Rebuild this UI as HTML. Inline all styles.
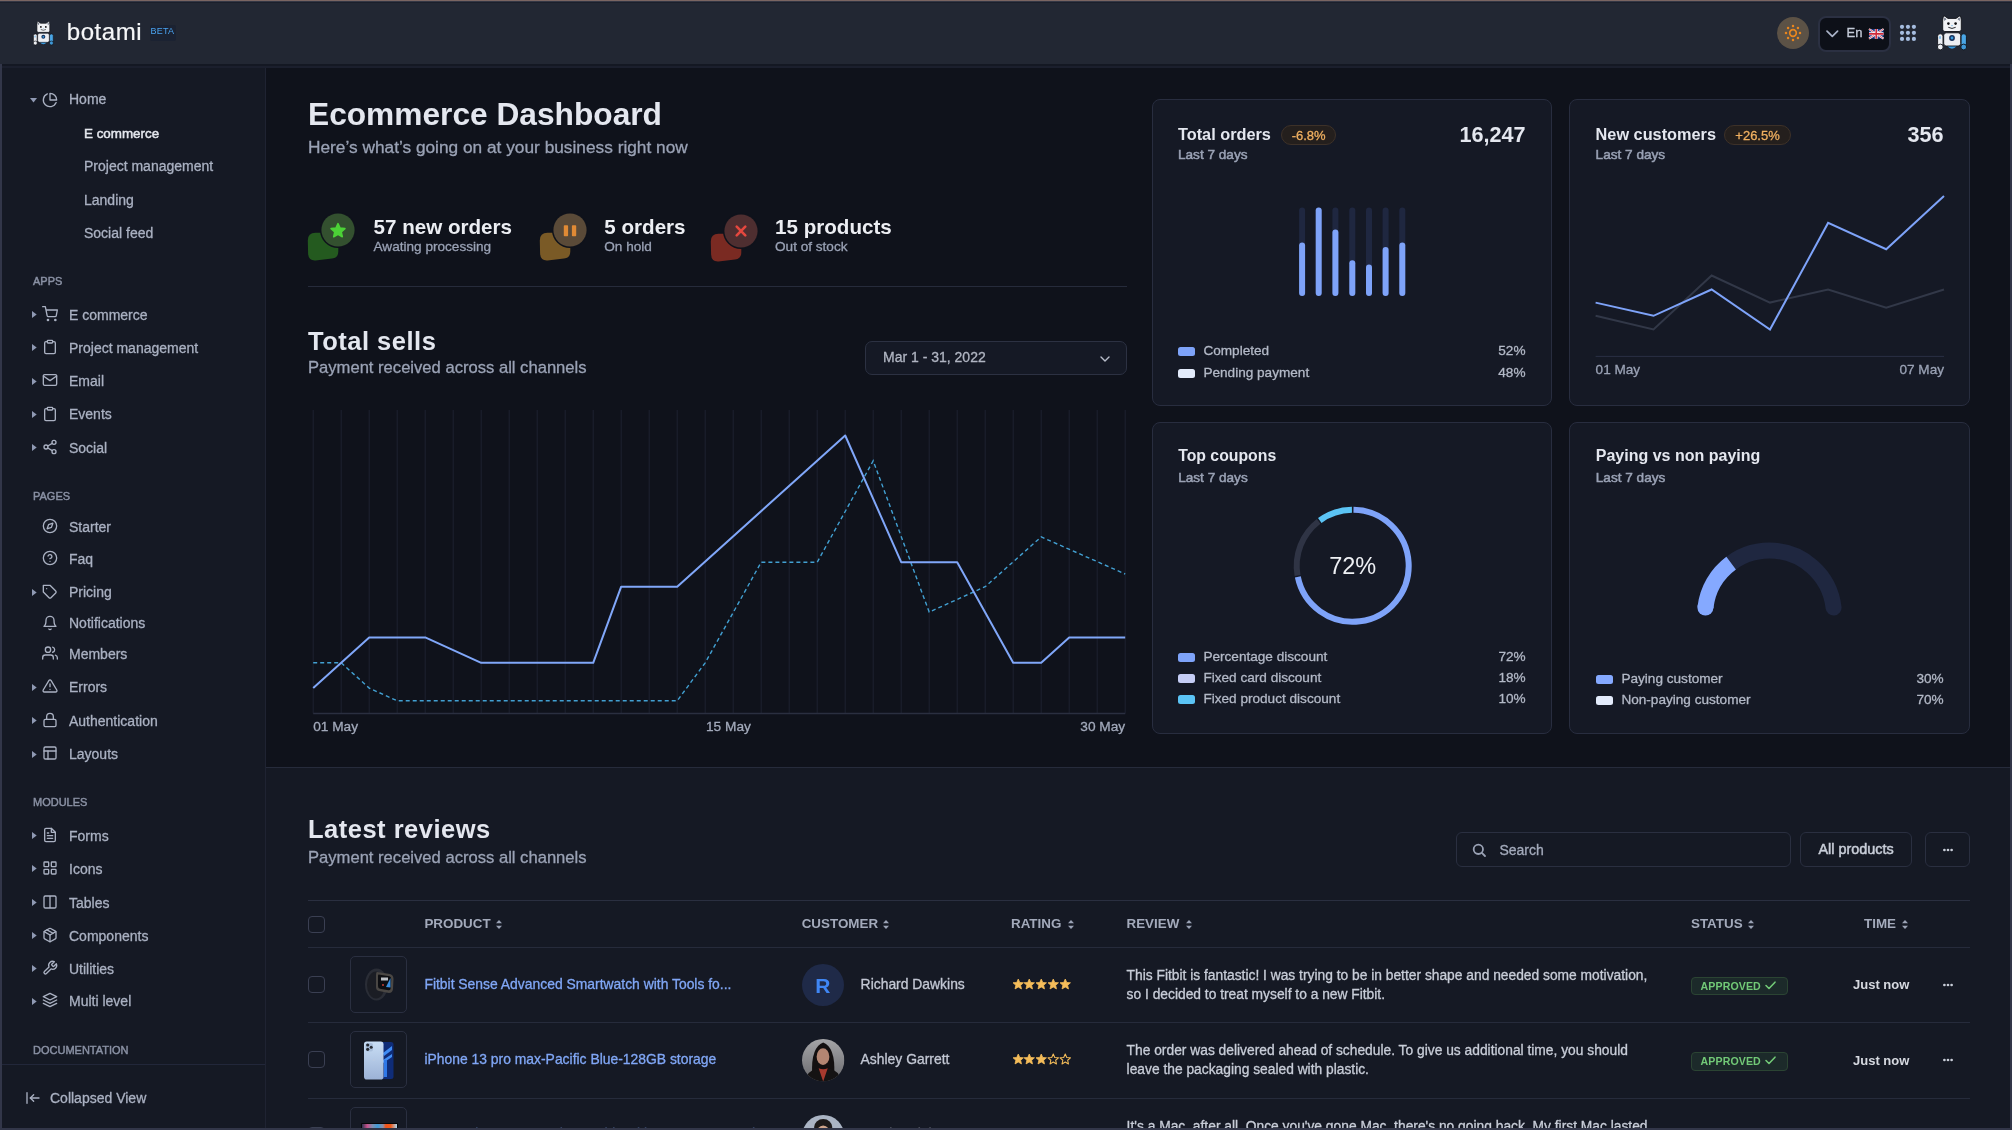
<!DOCTYPE html>
<html><head><meta charset="utf-8">
<style>
*{box-sizing:border-box;margin:0;padding:0}
html,body{width:2012px;height:1130px;overflow:hidden;background:#0f121b;font-family:"Liberation Sans",sans-serif;}
.a{position:absolute;white-space:nowrap}
svg.a{overflow:visible}
</style></head><body>
<div id="root" style="position:absolute;left:0;top:0;width:2012px;height:1130px;overflow:hidden;will-change:transform">

<div class="a" style="left:0px;top:0px;width:2012px;height:64px;background:#222733;"></div>
<div class="a" style="left:0px;top:0px;width:2012px;height:1px;background:#7a6562;"></div>
<div class="a" style="left:0px;top:1px;width:2012px;height:1px;background:#333644;"></div>
<div class="a" style="left:0px;top:2px;width:2012px;height:1px;background:#1b1f2b;"></div>
<div class="a" style="left:2px;top:64px;width:2008px;height:2px;background:#141823;"></div>
<div class="a" style="left:2px;top:66px;width:2008px;height:2px;background:#1b1f2d;"></div>
<div class="a" style="left:2px;top:68px;width:263px;height:1060px;background:#151924;"></div>
<div class="a" style="left:265px;top:68px;width:1px;height:1060px;background:#1f2332;"></div>
<div class="a" style="left:266px;top:767px;width:1744px;height:361px;background:#151924;"></div>
<div class="a" style="left:266px;top:767px;width:1744px;height:1px;background:#262b3b;"></div>
<svg class="a" style="left:30px;top:97.7px" width="8" height="6"><polygon points="0,0 7,0 3.5,4.5" fill="#8f99b3"/></svg>
<svg class="a" style="left:42px;top:92px" width="16" height="16" viewBox="0 0 24 24" fill="none" stroke="#aab1c2" stroke-width="2" stroke-linecap="round" stroke-linejoin="round"><path d="M21.21 15.89A10 10 0 1 1 8 2.83"/><path d="M22 12A10 10 0 0 0 12 2v10z"/></svg>
<div class="a" style="left:69px;top:92.35px;font-size:14px;line-height:14px;color:#aab1c2;-webkit-text-stroke:0.3px #aab1c2;">Home</div>
<div class="a" style="left:84px;top:126.56px;font-size:13.4px;line-height:13.4px;color:#e5e8ef;-webkit-text-stroke:0.45px #e5e8ef;">E commerce</div>
<div class="a" style="left:84px;top:159.35px;font-size:14px;line-height:14px;color:#aab1c2;-webkit-text-stroke:0.3px #aab1c2;">Project management</div>
<div class="a" style="left:84px;top:192.65px;font-size:14px;line-height:14px;color:#aab1c2;-webkit-text-stroke:0.3px #aab1c2;">Landing</div>
<div class="a" style="left:84px;top:225.95px;font-size:14px;line-height:14px;color:#aab1c2;-webkit-text-stroke:0.3px #aab1c2;">Social feed</div>
<div class="a" style="left:33px;top:275.89px;font-size:11px;line-height:11px;color:#8a91a4;-webkit-text-stroke:0.45px #8a91a4;">APPS</div>
<svg class="a" style="left:32px;top:311.2px" width="6" height="8"><polygon points="0,0 4.7,3.5 0,7" fill="#8f99b3"/></svg>
<svg class="a" style="left:42px;top:305.7px" width="16" height="16" viewBox="0 0 24 24" fill="none" stroke="#aab1c2" stroke-width="2" stroke-linecap="round" stroke-linejoin="round"><circle cx="9" cy="21" r="1"/><circle cx="20" cy="21" r="1"/><path d="M1 1h4l2.68 13.39a2 2 0 0 0 2 1.61h9.72a2 2 0 0 0 2-1.61L23 6H6"/></svg>
<div class="a" style="left:69px;top:307.65px;font-size:14px;line-height:14px;color:#aab1c2;-webkit-text-stroke:0.3px #aab1c2;">E commerce</div>
<svg class="a" style="left:32px;top:344.4px" width="6" height="8"><polygon points="0,0 4.7,3.5 0,7" fill="#8f99b3"/></svg>
<svg class="a" style="left:42px;top:338.9px" width="16" height="16" viewBox="0 0 24 24" fill="none" stroke="#aab1c2" stroke-width="2" stroke-linecap="round" stroke-linejoin="round"><path d="M16 4h2a2 2 0 0 1 2 2v14a2 2 0 0 1-2 2H6a2 2 0 0 1-2-2V6a2 2 0 0 1 2-2h2"/><rect x="8" y="2" width="8" height="4" rx="1" ry="1"/></svg>
<div class="a" style="left:69px;top:340.85px;font-size:14px;line-height:14px;color:#aab1c2;-webkit-text-stroke:0.3px #aab1c2;">Project management</div>
<svg class="a" style="left:32px;top:377.6px" width="6" height="8"><polygon points="0,0 4.7,3.5 0,7" fill="#8f99b3"/></svg>
<svg class="a" style="left:42px;top:372.1px" width="16" height="16" viewBox="0 0 24 24" fill="none" stroke="#aab1c2" stroke-width="2" stroke-linecap="round" stroke-linejoin="round"><path d="M4 4h16c1.1 0 2 .9 2 2v12c0 1.1-.9 2-2 2H4c-1.1 0-2-.9-2-2V6c0-1.1.9-2 2-2z"/><polyline points="22,6 12,13 2,6"/></svg>
<div class="a" style="left:69px;top:374.05px;font-size:14px;line-height:14px;color:#aab1c2;-webkit-text-stroke:0.3px #aab1c2;">Email</div>
<svg class="a" style="left:32px;top:411px" width="6" height="8"><polygon points="0,0 4.7,3.5 0,7" fill="#8f99b3"/></svg>
<svg class="a" style="left:42px;top:405.5px" width="16" height="16" viewBox="0 0 24 24" fill="none" stroke="#aab1c2" stroke-width="2" stroke-linecap="round" stroke-linejoin="round"><path d="M16 4h2a2 2 0 0 1 2 2v14a2 2 0 0 1-2 2H6a2 2 0 0 1-2-2V6a2 2 0 0 1 2-2h2"/><rect x="8" y="2" width="8" height="4" rx="1" ry="1"/></svg>
<div class="a" style="left:69px;top:407.45px;font-size:14px;line-height:14px;color:#aab1c2;-webkit-text-stroke:0.3px #aab1c2;">Events</div>
<svg class="a" style="left:32px;top:444.2px" width="6" height="8"><polygon points="0,0 4.7,3.5 0,7" fill="#8f99b3"/></svg>
<svg class="a" style="left:42px;top:438.7px" width="16" height="16" viewBox="0 0 24 24" fill="none" stroke="#aab1c2" stroke-width="2" stroke-linecap="round" stroke-linejoin="round"><circle cx="18" cy="5" r="3"/><circle cx="6" cy="12" r="3"/><circle cx="18" cy="19" r="3"/><line x1="8.59" y1="13.51" x2="15.42" y2="17.49"/><line x1="15.41" y1="6.51" x2="8.59" y2="10.49"/></svg>
<div class="a" style="left:69px;top:440.65px;font-size:14px;line-height:14px;color:#aab1c2;-webkit-text-stroke:0.3px #aab1c2;">Social</div>
<div class="a" style="left:33px;top:491.09px;font-size:11px;line-height:11px;color:#8a91a4;-webkit-text-stroke:0.45px #8a91a4;">PAGES</div>
<svg class="a" style="left:42px;top:518.3px" width="16" height="16" viewBox="0 0 24 24" fill="none" stroke="#aab1c2" stroke-width="2" stroke-linecap="round" stroke-linejoin="round"><circle cx="12" cy="12" r="10"/><polygon points="16.24 7.76 14.12 14.12 7.76 16.24 9.88 9.88 16.24 7.76"/></svg>
<div class="a" style="left:69px;top:520.25px;font-size:14px;line-height:14px;color:#aab1c2;-webkit-text-stroke:0.3px #aab1c2;">Starter</div>
<svg class="a" style="left:42px;top:550.0px" width="16" height="16" viewBox="0 0 24 24" fill="none" stroke="#aab1c2" stroke-width="2" stroke-linecap="round" stroke-linejoin="round"><circle cx="12" cy="12" r="10"/><path d="M9.09 9a3 3 0 0 1 5.83 1c0 2-3 3-3 3"/><line x1="12" y1="17" x2="12.01" y2="17"/></svg>
<div class="a" style="left:69px;top:551.95px;font-size:14px;line-height:14px;color:#aab1c2;-webkit-text-stroke:0.3px #aab1c2;">Faq</div>
<svg class="a" style="left:32px;top:589px" width="6" height="8"><polygon points="0,0 4.7,3.5 0,7" fill="#8f99b3"/></svg>
<svg class="a" style="left:42px;top:583.5px" width="16" height="16" viewBox="0 0 24 24" fill="none" stroke="#aab1c2" stroke-width="2" stroke-linecap="round" stroke-linejoin="round"><path d="M20.59 13.41l-7.17 7.17a2 2 0 0 1-2.83 0L2 12V2h10l8.59 8.59a2 2 0 0 1 0 2.82z"/><line x1="7" y1="7" x2="7.01" y2="7"/></svg>
<div class="a" style="left:69px;top:585.45px;font-size:14px;line-height:14px;color:#aab1c2;-webkit-text-stroke:0.3px #aab1c2;">Pricing</div>
<svg class="a" style="left:42px;top:614.5px" width="16" height="16" viewBox="0 0 24 24" fill="none" stroke="#aab1c2" stroke-width="2" stroke-linecap="round" stroke-linejoin="round"><path d="M18 8A6 6 0 0 0 6 8c0 7-3 9-3 9h18s-3-2-3-9"/><path d="M13.73 21a2 2 0 0 1-3.46 0"/></svg>
<div class="a" style="left:69px;top:616.45px;font-size:14px;line-height:14px;color:#aab1c2;-webkit-text-stroke:0.3px #aab1c2;">Notifications</div>
<svg class="a" style="left:42px;top:645.3px" width="16" height="16" viewBox="0 0 24 24" fill="none" stroke="#aab1c2" stroke-width="2" stroke-linecap="round" stroke-linejoin="round"><path d="M17 21v-2a4 4 0 0 0-4-4H5a4 4 0 0 0-4 4v2"/><circle cx="9" cy="7" r="4"/><path d="M23 21v-2a4 4 0 0 0-3-3.87"/><path d="M16 3.13a4 4 0 0 1 0 7.75"/></svg>
<div class="a" style="left:69px;top:647.25px;font-size:14px;line-height:14px;color:#aab1c2;-webkit-text-stroke:0.3px #aab1c2;">Members</div>
<svg class="a" style="left:32px;top:683.7px" width="6" height="8"><polygon points="0,0 4.7,3.5 0,7" fill="#8f99b3"/></svg>
<svg class="a" style="left:42px;top:678.2px" width="16" height="16" viewBox="0 0 24 24" fill="none" stroke="#aab1c2" stroke-width="2" stroke-linecap="round" stroke-linejoin="round"><path d="M10.29 3.86L1.82 18a2 2 0 0 0 1.71 3h16.94a2 2 0 0 0 1.71-3L13.71 3.86a2 2 0 0 0-3.42 0z"/><line x1="12" y1="9" x2="12" y2="13"/><line x1="12" y1="17" x2="12.01" y2="17"/></svg>
<div class="a" style="left:69px;top:680.15px;font-size:14px;line-height:14px;color:#aab1c2;-webkit-text-stroke:0.3px #aab1c2;">Errors</div>
<svg class="a" style="left:32px;top:717.4px" width="6" height="8"><polygon points="0,0 4.7,3.5 0,7" fill="#8f99b3"/></svg>
<svg class="a" style="left:42px;top:711.9px" width="16" height="16" viewBox="0 0 24 24" fill="none" stroke="#aab1c2" stroke-width="2" stroke-linecap="round" stroke-linejoin="round"><rect x="3" y="11" width="18" height="11" rx="2" ry="2"/><path d="M7 11V7a5 5 0 0 1 10 0v4"/></svg>
<div class="a" style="left:69px;top:713.85px;font-size:14px;line-height:14px;color:#aab1c2;-webkit-text-stroke:0.3px #aab1c2;">Authentication</div>
<svg class="a" style="left:32px;top:750.6px" width="6" height="8"><polygon points="0,0 4.7,3.5 0,7" fill="#8f99b3"/></svg>
<svg class="a" style="left:42px;top:745.1px" width="16" height="16" viewBox="0 0 24 24" fill="none" stroke="#aab1c2" stroke-width="2" stroke-linecap="round" stroke-linejoin="round"><rect x="3" y="3" width="18" height="18" rx="2" ry="2"/><line x1="3" y1="9" x2="21" y2="9"/><line x1="9" y1="21" x2="9" y2="9"/></svg>
<div class="a" style="left:69px;top:747.05px;font-size:14px;line-height:14px;color:#aab1c2;-webkit-text-stroke:0.3px #aab1c2;">Layouts</div>
<div class="a" style="left:33px;top:797.49px;font-size:11px;line-height:11px;color:#8a91a4;-webkit-text-stroke:0.45px #8a91a4;">MODULES</div>
<svg class="a" style="left:32px;top:832.3px" width="6" height="8"><polygon points="0,0 4.7,3.5 0,7" fill="#8f99b3"/></svg>
<svg class="a" style="left:42px;top:826.8px" width="16" height="16" viewBox="0 0 24 24" fill="none" stroke="#aab1c2" stroke-width="2" stroke-linecap="round" stroke-linejoin="round"><path d="M14 2H6a2 2 0 0 0-2 2v16a2 2 0 0 0 2 2h12a2 2 0 0 0 2-2V8z"/><polyline points="14 2 14 8 20 8"/><line x1="16" y1="13" x2="8" y2="13"/><line x1="16" y1="17" x2="8" y2="17"/><polyline points="10 9 9 9 8 9"/></svg>
<div class="a" style="left:69px;top:828.75px;font-size:14px;line-height:14px;color:#aab1c2;-webkit-text-stroke:0.3px #aab1c2;">Forms</div>
<svg class="a" style="left:32px;top:865.3px" width="6" height="8"><polygon points="0,0 4.7,3.5 0,7" fill="#8f99b3"/></svg>
<svg class="a" style="left:42px;top:859.8px" width="16" height="16" viewBox="0 0 24 24" fill="none" stroke="#aab1c2" stroke-width="2" stroke-linecap="round" stroke-linejoin="round"><rect x="3" y="3" width="7" height="7" rx="1"/><rect x="14" y="3" width="7" height="7" rx="1"/><rect x="14" y="14" width="7" height="7" rx="1"/><rect x="3" y="14" width="7" height="7" rx="1"/></svg>
<div class="a" style="left:69px;top:861.75px;font-size:14px;line-height:14px;color:#aab1c2;-webkit-text-stroke:0.3px #aab1c2;">Icons</div>
<svg class="a" style="left:32px;top:899.3px" width="6" height="8"><polygon points="0,0 4.7,3.5 0,7" fill="#8f99b3"/></svg>
<svg class="a" style="left:42px;top:893.8px" width="16" height="16" viewBox="0 0 24 24" fill="none" stroke="#aab1c2" stroke-width="2" stroke-linecap="round" stroke-linejoin="round"><path d="M12 3h7a2 2 0 0 1 2 2v14a2 2 0 0 1-2 2h-7m0-18H5a2 2 0 0 0-2 2v14a2 2 0 0 0 2 2h7m0-18v18"/></svg>
<div class="a" style="left:69px;top:895.75px;font-size:14px;line-height:14px;color:#aab1c2;-webkit-text-stroke:0.3px #aab1c2;">Tables</div>
<svg class="a" style="left:32px;top:932.2px" width="6" height="8"><polygon points="0,0 4.7,3.5 0,7" fill="#8f99b3"/></svg>
<svg class="a" style="left:42px;top:926.7px" width="16" height="16" viewBox="0 0 24 24" fill="none" stroke="#aab1c2" stroke-width="2" stroke-linecap="round" stroke-linejoin="round"><line x1="16.5" y1="9.4" x2="7.5" y2="4.21"/><path d="M21 16V8a2 2 0 0 0-1-1.73l-7-4a2 2 0 0 0-2 0l-7 4A2 2 0 0 0 3 8v8a2 2 0 0 0 1 1.73l7 4a2 2 0 0 0 2 0l7-4A2 2 0 0 0 21 16z"/><polyline points="3.27 6.96 12 12.01 20.73 6.96"/><line x1="12" y1="22.08" x2="12" y2="12"/></svg>
<div class="a" style="left:69px;top:928.65px;font-size:14px;line-height:14px;color:#aab1c2;-webkit-text-stroke:0.3px #aab1c2;">Components</div>
<svg class="a" style="left:32px;top:965.2px" width="6" height="8"><polygon points="0,0 4.7,3.5 0,7" fill="#8f99b3"/></svg>
<svg class="a" style="left:42px;top:959.7px" width="16" height="16" viewBox="0 0 24 24" fill="none" stroke="#aab1c2" stroke-width="2" stroke-linecap="round" stroke-linejoin="round"><path d="M14.7 6.3a1 1 0 0 0 0 1.4l1.6 1.6a1 1 0 0 0 1.4 0l3.77-3.77a6 6 0 0 1-7.94 7.94l-6.91 6.91a2.12 2.12 0 0 1-3-3l6.91-6.91a6 6 0 0 1 7.94-7.94l-3.76 3.76z"/></svg>
<div class="a" style="left:69px;top:961.65px;font-size:14px;line-height:14px;color:#aab1c2;-webkit-text-stroke:0.3px #aab1c2;">Utilities</div>
<svg class="a" style="left:32px;top:997.9px" width="6" height="8"><polygon points="0,0 4.7,3.5 0,7" fill="#8f99b3"/></svg>
<svg class="a" style="left:42px;top:992.4px" width="16" height="16" viewBox="0 0 24 24" fill="none" stroke="#aab1c2" stroke-width="2" stroke-linecap="round" stroke-linejoin="round"><polygon points="12 2 2 7 12 12 22 7 12 2"/><polyline points="2 17 12 22 22 17"/><polyline points="2 12 12 17 22 12"/></svg>
<div class="a" style="left:69px;top:994.35px;font-size:14px;line-height:14px;color:#aab1c2;-webkit-text-stroke:0.3px #aab1c2;">Multi level</div>
<div class="a" style="left:33px;top:1045.39px;font-size:11px;line-height:11px;color:#8a91a4;-webkit-text-stroke:0.45px #8a91a4;">DOCUMENTATION</div>
<div class="a" style="left:2px;top:1064px;width:263px;height:1px;background:#22273a;"></div>
<svg class="a" style="left:25px;top:1090px" width="16" height="16" viewBox="0 0 24 24" fill="none" stroke="#aab1c2" stroke-width="2" stroke-linecap="round" stroke-linejoin="round"><line x1="3" y1="4" x2="3" y2="20"/><line x1="21" y1="12" x2="8" y2="12"/><polyline points="13 7 8 12 13 17"/></svg>
<div class="a" style="left:50px;top:1091.35px;font-size:14px;line-height:14px;color:#aab1c2;-webkit-text-stroke:0.3px #aab1c2;">Collapsed View</div>
<svg class="a" style="left:33.2px;top:20.56px" width="20.7" height="24.8" viewBox="0 0 30 36"><rect x="0.6" y="18.8" width="5.4" height="12.5" rx="2.4" fill="#eceef3" stroke="#101218" stroke-width="0.9"/><circle cx="3.3" cy="32" r="2.9" fill="#eceef3" stroke="#101218" stroke-width="0.9"/><rect x="2.2" y="21" width="1.6" height="3" rx="0.8" fill="#6db8ee"/><rect x="24" y="18.8" width="5.4" height="12.5" rx="2.4" fill="#4aa6e6" stroke="#101218" stroke-width="0.9"/><circle cx="26.7" cy="32" r="2.9" fill="#3f97d6" stroke="#101218" stroke-width="0.9"/><path d="M9.8 30.5 Q15 36.8 20.2 30.5 Z" fill="#3a9be0"/><path d="M6.2 2 Q6.4 0.3 7.8 1.2 L11 3.4 L19 3.4 L22.2 1.2 Q23.6 0.3 23.8 2 L24.3 5 L24.3 14.3 Q24.3 16.5 22.1 16.5 L7.9 16.5 Q5.7 16.5 5.7 14.3 L5.7 5 Z" fill="#f1f2f5" stroke="#101218" stroke-width="0.9"/><path d="M7.2 2.6 L9.6 3.9 L7.2 6 Z M22.8 2.6 L20.4 3.9 L22.8 6 Z" fill="#6d7484"/><circle cx="11.4" cy="8.6" r="1.3" fill="#0d0d10"/><circle cx="18.6" cy="8.6" r="1.3" fill="#0d0d10"/><circle cx="15" cy="10.6" r="0.6" fill="#4aa6e6"/><path d="M11.3 12.3 Q15 14.6 18.7 12.3" stroke="#2a2d33" stroke-width="1" fill="none"/><rect x="6.7" y="17.8" width="17" height="13.2" rx="2.6" fill="#eceef3" stroke="#101218" stroke-width="0.9"/><circle cx="15" cy="23" r="2.9" fill="#16305a"/><circle cx="15" cy="23" r="1.4" fill="#3a9be0"/></svg>
<div class="a" style="left:66.8px;top:20.48px;font-size:24px;line-height:24px;color:#f5f6f8;-webkit-text-stroke:0.2px #f5f6f8;letter-spacing:0.55px">botami</div>
<div class="a" style="left:150px;top:25.2px;width:25.6px;height:15.6px;background:#1b2232;border-radius:2px"></div>
<div class="a" style="left:150.6px;top:27.18px;font-size:9px;line-height:9px;color:#4aa3f0;letter-spacing:0.15px">BETA</div>
<div class="a" style="left:1777px;top:17px;width:32px;height:32px;border-radius:50%;background:#5c5246"></div>
<svg class="a" style="left:1783px;top:23px" width="20" height="20" viewBox="-10 -10 20 20"><circle cx="0" cy="0" r="3.3" fill="none" stroke="#e8861f" stroke-width="1.7"/><circle cx="0.00" cy="-7.00" r="1.25" fill="#e8861f"/><circle cx="4.95" cy="-4.95" r="1.25" fill="#e8861f"/><circle cx="7.00" cy="-0.00" r="1.25" fill="#e8861f"/><circle cx="4.95" cy="4.95" r="1.25" fill="#e8861f"/><circle cx="0.00" cy="7.00" r="1.25" fill="#e8861f"/><circle cx="-4.95" cy="4.95" r="1.25" fill="#e8861f"/><circle cx="-7.00" cy="0.00" r="1.25" fill="#e8861f"/><circle cx="-4.95" cy="-4.95" r="1.25" fill="#e8861f"/></svg>
<div class="a" style="left:1818px;top:15.5px;width:73px;height:36px;background:#0d1018;border:2px solid #2b3042;border-radius:8px;box-sizing:border-box"></div>
<svg class="a" style="left:1826px;top:30px" width="13" height="8" viewBox="0 0 13 8"><polyline points="1,1.2 6.3,6.4 11.6,1.2" fill="none" stroke="#aab3c8" stroke-width="1.7" stroke-linecap="round" stroke-linejoin="round"/></svg>
<div class="a" style="left:1846.5px;top:25.80px;font-size:13px;line-height:13px;color:#c5ccd9;-webkit-text-stroke:0.3px #c5ccd9;">En</div>
<svg class="a" style="left:1868.5px;top:27.8px" width="14.5" height="11.6" viewBox="0 0 60 40"><rect width="60" height="40" fill="#1d3a8a"/><path d="M0 0 L60 40 M60 0 L0 40" stroke="#fff" stroke-width="8"/><path d="M0 0 L60 40 M60 0 L0 40" stroke="#cf2a3a" stroke-width="3"/><path d="M30 0 V40 M0 20 H60" stroke="#fff" stroke-width="12"/><path d="M30 0 V40 M0 20 H60" stroke="#cf2a3a" stroke-width="7"/></svg>
<svg class="a" style="left:1898px;top:23px" width="20" height="20"><circle cx="4.00" cy="3.80" r="2.1" fill="#a6bde0"/><circle cx="9.95" cy="3.80" r="2.1" fill="#a6bde0"/><circle cx="15.90" cy="3.80" r="2.1" fill="#a6bde0"/><circle cx="4.00" cy="9.85" r="2.1" fill="#a6bde0"/><circle cx="9.95" cy="9.85" r="2.1" fill="#a6bde0"/><circle cx="15.90" cy="9.85" r="2.1" fill="#a6bde0"/><circle cx="4.00" cy="15.90" r="2.1" fill="#a6bde0"/><circle cx="9.95" cy="15.90" r="2.1" fill="#a6bde0"/><circle cx="15.90" cy="15.90" r="2.1" fill="#a6bde0"/></svg>
<svg class="a" style="left:1937px;top:15px" width="30.0" height="36.0" viewBox="0 0 30 36"><rect x="0.6" y="18.8" width="5.4" height="12.5" rx="2.4" fill="#eceef3" stroke="#101218" stroke-width="0.9"/><circle cx="3.3" cy="32" r="2.9" fill="#eceef3" stroke="#101218" stroke-width="0.9"/><rect x="2.2" y="21" width="1.6" height="3" rx="0.8" fill="#6db8ee"/><rect x="24" y="18.8" width="5.4" height="12.5" rx="2.4" fill="#4aa6e6" stroke="#101218" stroke-width="0.9"/><circle cx="26.7" cy="32" r="2.9" fill="#3f97d6" stroke="#101218" stroke-width="0.9"/><path d="M9.8 30.5 Q15 36.8 20.2 30.5 Z" fill="#3a9be0"/><path d="M6.2 2 Q6.4 0.3 7.8 1.2 L11 3.4 L19 3.4 L22.2 1.2 Q23.6 0.3 23.8 2 L24.3 5 L24.3 14.3 Q24.3 16.5 22.1 16.5 L7.9 16.5 Q5.7 16.5 5.7 14.3 L5.7 5 Z" fill="#f1f2f5" stroke="#101218" stroke-width="0.9"/><path d="M7.2 2.6 L9.6 3.9 L7.2 6 Z M22.8 2.6 L20.4 3.9 L22.8 6 Z" fill="#6d7484"/><circle cx="11.4" cy="8.6" r="1.3" fill="#0d0d10"/><circle cx="18.6" cy="8.6" r="1.3" fill="#0d0d10"/><circle cx="15" cy="10.6" r="0.6" fill="#4aa6e6"/><path d="M11.3 12.3 Q15 14.6 18.7 12.3" stroke="#2a2d33" stroke-width="1" fill="none"/><rect x="6.7" y="17.8" width="17" height="13.2" rx="2.6" fill="#eceef3" stroke="#101218" stroke-width="0.9"/><circle cx="15" cy="23" r="2.9" fill="#16305a"/><circle cx="15" cy="23" r="1.4" fill="#3a9be0"/></svg>
<div class="a" style="left:308px;top:98.67px;font-size:31.7px;line-height:31.7px;color:#e4e7ef;font-weight:700;">Ecommerce Dashboard</div>
<div class="a" style="left:308px;top:139.06px;font-size:17.3px;line-height:17.3px;color:#9aa2b5;-webkit-text-stroke:0.3px #9aa2b5;">Here&#8217;s what&#8217;s going on at your business right now</div>
<div class="a" style="left:308px;top:286px;width:819px;height:1px;background:#262b3b;"></div>
<svg class="a" style="left:303.4px;top:205.4px" width="60" height="60" viewBox="-35 -25 60 60"><path d="M -22.5 2.8 L -12 2.8 L 0.3 15 L 0.3 21.5 Q 0.3 28 -6 28.4 L -22.5 30.4 Q -29.6 30.8 -29.9 23.5 L -30.2 10.5 Q -30.2 2.8 -22.5 2.8 Z" fill="#245a1f"/><circle cx="0" cy="0" r="18" fill="#0f121b"/><circle cx="0" cy="0" r="16.6" fill="#33502f"/><polygon points="0,-7.2 2.1,-2.6 7.1,-2.2 3.3,1.2 4.4,6.2 0,3.6 -4.4,6.2 -3.3,1.2 -7.1,-2.2 -2.1,-2.6" fill="#4cd137" stroke="#4cd137" stroke-width="1.6" stroke-linejoin="round" transform="translate(0,0.7) scale(0.98)"/></svg>
<svg class="a" style="left:534.8px;top:205px" width="60" height="60" viewBox="-35 -25 60 60"><path d="M -22.5 2.8 L -12 2.8 L 0.3 15 L 0.3 21.5 Q 0.3 28 -6 28.4 L -22.5 30.4 Q -29.6 30.8 -29.9 23.5 L -30.2 10.5 Q -30.2 2.8 -22.5 2.8 Z" fill="#7a5a26"/><circle cx="0" cy="0" r="18" fill="#0f121b"/><circle cx="0" cy="0" r="16.6" fill="#5a4a38"/><rect x="-6.2" y="-4.7" width="4.3" height="11" rx="0.8" fill="#e08a35"/><rect x="1.9" y="-4.7" width="4.3" height="11" rx="0.8" fill="#e08a35"/></svg>
<svg class="a" style="left:705.5px;top:205.5px" width="60" height="60" viewBox="-35 -25 60 60"><path d="M -22.5 2.8 L -12 2.8 L 0.3 15 L 0.3 21.5 Q 0.3 28 -6 28.4 L -22.5 30.4 Q -29.6 30.8 -29.9 23.5 L -30.2 10.5 Q -30.2 2.8 -22.5 2.8 Z" fill="#7a2a22"/><circle cx="0" cy="0" r="18" fill="#0f121b"/><circle cx="0" cy="0" r="16.6" fill="#4e2e30"/><path d="M -4.3 -4.3 L 4.3 4.3 M 4.3 -4.3 L -4.3 4.3" stroke="#e5483f" stroke-width="2.6" stroke-linecap="round"/></svg>
<div class="a" style="left:373.5px;top:216.66px;font-size:20.6px;line-height:20.6px;color:#eceef3;font-weight:700;">57 new orders</div>
<div class="a" style="left:373.5px;top:239.79px;font-size:13.6px;line-height:13.6px;color:#9aa2b5;-webkit-text-stroke:0.3px #9aa2b5;">Awating processing</div>
<div class="a" style="left:604.3px;top:216.66px;font-size:20.6px;line-height:20.6px;color:#eceef3;font-weight:700;">5 orders</div>
<div class="a" style="left:604.3px;top:239.79px;font-size:13.6px;line-height:13.6px;color:#9aa2b5;-webkit-text-stroke:0.3px #9aa2b5;">On hold</div>
<div class="a" style="left:775px;top:216.66px;font-size:20.6px;line-height:20.6px;color:#eceef3;font-weight:700;">15 products</div>
<div class="a" style="left:775px;top:239.79px;font-size:13.6px;line-height:13.6px;color:#9aa2b5;-webkit-text-stroke:0.3px #9aa2b5;">Out of stock</div>
<div class="a" style="left:308px;top:329.01px;font-size:25.5px;line-height:25.5px;color:#e4e7ef;font-weight:700;letter-spacing:0.5px">Total sells</div>
<div class="a" style="left:308px;top:359.95px;font-size:16.6px;line-height:16.6px;color:#9aa2b5;-webkit-text-stroke:0.3px #9aa2b5;">Payment received across all channels</div>
<div class="a" style="left:865px;top:341px;width:262px;height:34px;background:#151925;border:1px solid #2c3142;border-radius:7px;box-sizing:border-box"></div>
<div class="a" style="left:883px;top:349.65px;font-size:14px;line-height:14px;color:#b0b5c2;-webkit-text-stroke:0.3px #b0b5c2;">Mar 1 - 31, 2022</div>
<svg class="a" style="left:1099.5px;top:355.5px" width="11" height="7" viewBox="0 0 11 7"><polyline points="1,1 5,5 9,1" fill="none" stroke="#b8bdca" stroke-width="1.4" stroke-linecap="round" stroke-linejoin="round"/></svg>
<svg class="a" style="left:0;top:0" width="2012" height="1130"><line x1="313.20" y1="410" x2="313.20" y2="713.5" stroke="#1e2231" stroke-width="1"/><line x1="341.20" y1="410" x2="341.20" y2="713.5" stroke="#1e2231" stroke-width="1"/><line x1="369.20" y1="410" x2="369.20" y2="713.5" stroke="#1e2231" stroke-width="1"/><line x1="397.20" y1="410" x2="397.20" y2="713.5" stroke="#1e2231" stroke-width="1"/><line x1="425.20" y1="410" x2="425.20" y2="713.5" stroke="#1e2231" stroke-width="1"/><line x1="453.20" y1="410" x2="453.20" y2="713.5" stroke="#1e2231" stroke-width="1"/><line x1="481.20" y1="410" x2="481.20" y2="713.5" stroke="#1e2231" stroke-width="1"/><line x1="509.20" y1="410" x2="509.20" y2="713.5" stroke="#1e2231" stroke-width="1"/><line x1="537.20" y1="410" x2="537.20" y2="713.5" stroke="#1e2231" stroke-width="1"/><line x1="565.20" y1="410" x2="565.20" y2="713.5" stroke="#1e2231" stroke-width="1"/><line x1="593.20" y1="410" x2="593.20" y2="713.5" stroke="#1e2231" stroke-width="1"/><line x1="621.20" y1="410" x2="621.20" y2="713.5" stroke="#1e2231" stroke-width="1"/><line x1="649.20" y1="410" x2="649.20" y2="713.5" stroke="#1e2231" stroke-width="1"/><line x1="677.20" y1="410" x2="677.20" y2="713.5" stroke="#1e2231" stroke-width="1"/><line x1="705.20" y1="410" x2="705.20" y2="713.5" stroke="#1e2231" stroke-width="1"/><line x1="733.20" y1="410" x2="733.20" y2="713.5" stroke="#1e2231" stroke-width="1"/><line x1="761.20" y1="410" x2="761.20" y2="713.5" stroke="#1e2231" stroke-width="1"/><line x1="789.20" y1="410" x2="789.20" y2="713.5" stroke="#1e2231" stroke-width="1"/><line x1="817.20" y1="410" x2="817.20" y2="713.5" stroke="#1e2231" stroke-width="1"/><line x1="845.20" y1="410" x2="845.20" y2="713.5" stroke="#1e2231" stroke-width="1"/><line x1="873.20" y1="410" x2="873.20" y2="713.5" stroke="#1e2231" stroke-width="1"/><line x1="901.20" y1="410" x2="901.20" y2="713.5" stroke="#1e2231" stroke-width="1"/><line x1="929.20" y1="410" x2="929.20" y2="713.5" stroke="#1e2231" stroke-width="1"/><line x1="957.20" y1="410" x2="957.20" y2="713.5" stroke="#1e2231" stroke-width="1"/><line x1="985.20" y1="410" x2="985.20" y2="713.5" stroke="#1e2231" stroke-width="1"/><line x1="1013.20" y1="410" x2="1013.20" y2="713.5" stroke="#1e2231" stroke-width="1"/><line x1="1041.20" y1="410" x2="1041.20" y2="713.5" stroke="#1e2231" stroke-width="1"/><line x1="1069.20" y1="410" x2="1069.20" y2="713.5" stroke="#1e2231" stroke-width="1"/><line x1="1097.20" y1="410" x2="1097.20" y2="713.5" stroke="#1e2231" stroke-width="1"/><line x1="1125.20" y1="410" x2="1125.20" y2="713.5" stroke="#1e2231" stroke-width="1"/><line x1="313.2" y1="713.5" x2="1125.2" y2="713.5" stroke="#2a2f40" stroke-width="1.5"/><polyline points="313.20,662.8 341.20,662.8 369.20,688.1 397.20,700.8 677.20,700.8 705.20,662.8 761.20,562.2 817.20,562.2 873.20,460.8 929.20,612.1 985.20,586.7 1041.20,536.9 1125.20,574" fill="none" stroke="#42a0d2" stroke-width="1.4" stroke-dasharray="4 3"/><polyline points="313.20,688.1 369.20,637.4 425.20,637.4 481.20,662.8 593.20,662.8 621.20,586.7 677.20,586.7 845.20,435.5 901.20,562.2 957.20,562.2 1013.20,662.8 1041.20,662.8 1069.20,637.4 1125.20,637.4" fill="none" stroke="#80a7f9" stroke-width="2" stroke-linejoin="round"/></svg>
<div class="a" style="left:313.2px;top:720.00px;font-size:13.7px;line-height:13.7px;color:#a3aabb;-webkit-text-stroke:0.3px #a3aabb;">01 May</div>
<div class="a" style="left:706px;top:720.00px;font-size:13.7px;line-height:13.7px;color:#a3aabb;-webkit-text-stroke:0.3px #a3aabb;">15 May</div>
<div class="a" style="right:886.8px;top:720.00px;font-size:13.7px;line-height:13.7px;color:#a3aabb;-webkit-text-stroke:0.3px #a3aabb;">30 May</div>
<div class="a" style="left:1152px;top:99px;width:400px;height:307px;background:#151925;border:1px solid #282d3f;border-radius:8px;box-sizing:border-box"></div>
<div class="a" style="left:1569px;top:99px;width:401px;height:307px;background:#151925;border:1px solid #282d3f;border-radius:8px;box-sizing:border-box"></div>
<div class="a" style="left:1152px;top:422px;width:400px;height:312px;background:#151925;border:1px solid #282d3f;border-radius:8px;box-sizing:border-box"></div>
<div class="a" style="left:1569px;top:422px;width:401px;height:312px;background:#151925;border:1px solid #282d3f;border-radius:8px;box-sizing:border-box"></div>
<div class="a" style="left:1178px;top:126.40px;font-size:16.3px;line-height:16.3px;color:#e4e7ef;font-weight:700;">Total orders</div>
<div class="a" style="left:1280.8px;top:125px;width:55.7px;height:19.6px;background:#241f1d;border:1px solid #3d3128;border-radius:10px;box-sizing:border-box"></div>
<div class="a" style="left:1280.8px;width:55.7px;text-align:center;top:128.60px;font-size:13px;line-height:13px;color:#f0b060;-webkit-text-stroke:0.3px #f0b060;">-6.8%</div>
<div class="a" style="right:486.5px;top:124.32px;font-size:21.6px;line-height:21.6px;color:#e4e7ef;font-weight:700;">16,247</div>
<div class="a" style="left:1178px;top:147.69px;font-size:13.6px;line-height:13.6px;color:#9aa2b5;-webkit-text-stroke:0.5px #9aa2b5;">Last 7 days</div>
<svg class="a" style="left:0;top:0" width="2012" height="1130"><line x1="1302.1" y1="210.4" x2="1302.1" y2="292.9" stroke="#1f2740" stroke-width="6" stroke-linecap="round"/><line x1="1302.1" y1="245.5" x2="1302.1" y2="292.9" stroke="#7ea3f9" stroke-width="6" stroke-linecap="round"/><line x1="1318.7" y1="210.4" x2="1318.7" y2="292.9" stroke="#1f2740" stroke-width="6" stroke-linecap="round"/><line x1="1318.7" y1="210.4" x2="1318.7" y2="292.9" stroke="#7ea3f9" stroke-width="6" stroke-linecap="round"/><line x1="1335.4" y1="210.4" x2="1335.4" y2="292.9" stroke="#1f2740" stroke-width="6" stroke-linecap="round"/><line x1="1335.4" y1="232.6" x2="1335.4" y2="292.9" stroke="#7ea3f9" stroke-width="6" stroke-linecap="round"/><line x1="1352.3" y1="210.4" x2="1352.3" y2="292.9" stroke="#1f2740" stroke-width="6" stroke-linecap="round"/><line x1="1352.3" y1="263.3" x2="1352.3" y2="292.9" stroke="#7ea3f9" stroke-width="6" stroke-linecap="round"/><line x1="1369" y1="210.4" x2="1369" y2="292.9" stroke="#1f2740" stroke-width="6" stroke-linecap="round"/><line x1="1369" y1="267.6" x2="1369" y2="292.9" stroke="#7ea3f9" stroke-width="6" stroke-linecap="round"/><line x1="1385.6" y1="210.4" x2="1385.6" y2="292.9" stroke="#1f2740" stroke-width="6" stroke-linecap="round"/><line x1="1385.6" y1="250.1" x2="1385.6" y2="292.9" stroke="#7ea3f9" stroke-width="6" stroke-linecap="round"/><line x1="1402.3" y1="210.4" x2="1402.3" y2="292.9" stroke="#1f2740" stroke-width="6" stroke-linecap="round"/><line x1="1402.3" y1="245.5" x2="1402.3" y2="292.9" stroke="#7ea3f9" stroke-width="6" stroke-linecap="round"/></svg>
<div class="a" style="left:1178px;top:347.40000000000003px;width:17px;height:9px;background:#7ea3f9;border-radius:2.5px"></div>
<div class="a" style="left:1203.4px;top:344.29px;font-size:13.6px;line-height:13.6px;color:#b3b9c7;-webkit-text-stroke:0.3px #b3b9c7;">Completed</div>
<div class="a" style="right:486.5px;top:344.29px;font-size:13.6px;line-height:13.6px;color:#b3b9c7;-webkit-text-stroke:0.3px #b3b9c7;">52%</div>
<div class="a" style="left:1178px;top:368.70000000000005px;width:17px;height:9px;background:#e3ebfb;border-radius:2.5px"></div>
<div class="a" style="left:1203.4px;top:365.59px;font-size:13.6px;line-height:13.6px;color:#b3b9c7;-webkit-text-stroke:0.3px #b3b9c7;">Pending payment</div>
<div class="a" style="right:486.5px;top:365.59px;font-size:13.6px;line-height:13.6px;color:#b3b9c7;-webkit-text-stroke:0.3px #b3b9c7;">48%</div>
<div class="a" style="left:1595.6px;top:126.40px;font-size:16.3px;line-height:16.3px;color:#e4e7ef;font-weight:700;">New customers</div>
<div class="a" style="left:1724.4px;top:125px;width:66.3px;height:19.6px;background:#241f1d;border:1px solid #3d3128;border-radius:10px;box-sizing:border-box"></div>
<div class="a" style="left:1724.4px;width:66.3px;text-align:center;top:128.60px;font-size:13px;line-height:13px;color:#f0b060;-webkit-text-stroke:0.3px #f0b060;">+26.5%</div>
<div class="a" style="right:68.5px;top:124.32px;font-size:21.6px;line-height:21.6px;color:#e4e7ef;font-weight:700;">356</div>
<div class="a" style="left:1595.6px;top:147.69px;font-size:13.6px;line-height:13.6px;color:#9aa2b5;-webkit-text-stroke:0.5px #9aa2b5;">Last 7 days</div>
<svg class="a" style="left:0;top:0" width="2012" height="1130"><line x1="1595.6" y1="356.4" x2="1944" y2="356.4" stroke="#2a3044" stroke-width="1"/><polyline points="1595.6,315.8 1653.5,329.5 1711.6,275.5 1770,302.6 1828.1,289.5 1886.2,307.6 1944,289.5" fill="none" stroke="#323848" stroke-width="2"/><polyline points="1595.6,302.6 1653.5,315.8 1711.6,289.5 1770,329.5 1828.1,222.9 1886.2,249.2 1944,196" fill="none" stroke="#7ea3f9" stroke-width="2"/></svg>
<div class="a" style="left:1595.6px;top:363.19px;font-size:13.6px;line-height:13.6px;color:#9aa2b5;-webkit-text-stroke:0.3px #9aa2b5;">01 May</div>
<div class="a" style="right:68px;top:363.19px;font-size:13.6px;line-height:13.6px;color:#9aa2b5;-webkit-text-stroke:0.3px #9aa2b5;">07 May</div>
<div class="a" style="left:1178.2px;top:448.33px;font-size:15.8px;line-height:15.8px;color:#e4e7ef;font-weight:700;">Top coupons</div>
<div class="a" style="left:1178.2px;top:471.29px;font-size:13.6px;line-height:13.6px;color:#9aa2b5;-webkit-text-stroke:0.5px #9aa2b5;">Last 7 days</div>
<svg class="a" style="left:0;top:0" width="2012" height="1130"><path d="M 1353.48 509.81 A 56 56 0 1 1 1297.82 576.96" fill="none" stroke="#7ea3f9" stroke-width="6"/><path d="M 1297.55 575.52 A 56 56 0 0 1 1318.61 521.37" fill="none" stroke="#2f3445" stroke-width="6"/><path d="M 1319.78 520.50 A 56 56 0 0 1 1351.92 509.81" fill="none" stroke="#5bc4f5" stroke-width="6"/></svg>
<div class="a" style="left:1312.7px;width:80px;text-align:center;top:554.61px;font-size:23.5px;line-height:23.5px;color:#eef0f4;">72%</div>
<div class="a" style="left:1178px;top:652.8000000000001px;width:17px;height:9px;background:#7ea3f9;border-radius:2.5px"></div>
<div class="a" style="left:1203.4px;top:649.69px;font-size:13.6px;line-height:13.6px;color:#b3b9c7;-webkit-text-stroke:0.3px #b3b9c7;">Percentage discount</div>
<div class="a" style="right:486.29999999999995px;top:649.69px;font-size:13.6px;line-height:13.6px;color:#b3b9c7;-webkit-text-stroke:0.3px #b3b9c7;">72%</div>
<div class="a" style="left:1178px;top:673.9px;width:17px;height:9px;background:#c5cdf5;border-radius:2.5px"></div>
<div class="a" style="left:1203.4px;top:670.79px;font-size:13.6px;line-height:13.6px;color:#b3b9c7;-webkit-text-stroke:0.3px #b3b9c7;">Fixed card discount</div>
<div class="a" style="right:486.29999999999995px;top:670.79px;font-size:13.6px;line-height:13.6px;color:#b3b9c7;-webkit-text-stroke:0.3px #b3b9c7;">18%</div>
<div class="a" style="left:1178px;top:694.9px;width:17px;height:9px;background:#5bc4f5;border-radius:2.5px"></div>
<div class="a" style="left:1203.4px;top:691.79px;font-size:13.6px;line-height:13.6px;color:#b3b9c7;-webkit-text-stroke:0.3px #b3b9c7;">Fixed product discount</div>
<div class="a" style="right:486.29999999999995px;top:691.79px;font-size:13.6px;line-height:13.6px;color:#b3b9c7;-webkit-text-stroke:0.3px #b3b9c7;">10%</div>
<div class="a" style="left:1595.8px;top:448.16px;font-size:16px;line-height:16px;color:#e4e7ef;font-weight:700;">Paying vs non paying</div>
<div class="a" style="left:1595.8px;top:471.29px;font-size:13.6px;line-height:13.6px;color:#9aa2b5;-webkit-text-stroke:0.5px #9aa2b5;">Last 7 days</div>
<svg class="a" style="left:0;top:0" width="2012" height="1130"><path d="M 1705.43 607.59 A 64.5 64.5 0 0 1 1833.57 607.59" fill="none" stroke="#1f2740" stroke-width="16" stroke-linecap="round"/><path d="M 1705.43 607.59 A 64.5 64.5 0 0 1 1731.13 563.15" fill="none" stroke="#85a9ff" stroke-width="16" stroke-linecap="butt"/><circle cx="1705.43" cy="607.59" r="8" fill="#85a9ff"/></svg>
<div class="a" style="left:1596px;top:675.4px;width:17px;height:9px;background:#85a9ff;border-radius:2.5px"></div>
<div class="a" style="left:1621.4px;top:672.29px;font-size:13.6px;line-height:13.6px;color:#b3b9c7;-webkit-text-stroke:0.3px #b3b9c7;">Paying customer</div>
<div class="a" style="right:68.40000000000009px;top:672.29px;font-size:13.6px;line-height:13.6px;color:#b3b9c7;-webkit-text-stroke:0.3px #b3b9c7;">30%</div>
<div class="a" style="left:1596px;top:696.4px;width:17px;height:9px;background:#e3ebfb;border-radius:2.5px"></div>
<div class="a" style="left:1621.4px;top:693.29px;font-size:13.6px;line-height:13.6px;color:#b3b9c7;-webkit-text-stroke:0.3px #b3b9c7;">Non-paying customer</div>
<div class="a" style="right:68.40000000000009px;top:693.29px;font-size:13.6px;line-height:13.6px;color:#b3b9c7;-webkit-text-stroke:0.3px #b3b9c7;">70%</div>
<div class="a" style="left:308px;top:817.41px;font-size:25.5px;line-height:25.5px;color:#e4e7ef;font-weight:700;letter-spacing:0.5px">Latest reviews</div>
<div class="a" style="left:308px;top:849.95px;font-size:16.6px;line-height:16.6px;color:#9aa2b5;-webkit-text-stroke:0.3px #9aa2b5;">Payment received across all channels</div>
<div class="a" style="left:1456px;top:832.4px;width:335px;height:34.5px;background:#151924;border:1px solid #2a2f40;border-radius:6px;box-sizing:border-box"></div>
<svg class="a" style="left:1471px;top:841.5px" width="16" height="16" viewBox="0 0 24 24" fill="none" stroke="#9aa2b5" stroke-width="2.7" stroke-linecap="round" stroke-linejoin="round"><circle cx="11" cy="11" r="7"/><line x1="21" y1="21" x2="16.65" y2="16.65"/></svg>
<div class="a" style="left:1499.4px;top:842.65px;font-size:14px;line-height:14px;color:#a3aabb;-webkit-text-stroke:0.3px #a3aabb;">Search</div>
<div class="a" style="left:1800px;top:832.4px;width:112px;height:34.5px;background:#151924;border:1px solid #2a2f40;border-radius:6px;box-sizing:border-box"></div>
<div class="a" style="left:1800.0px;width:112px;text-align:center;top:842.31px;font-size:14.4px;line-height:14.4px;color:#c8cdd8;-webkit-text-stroke:0.5px #c8cdd8;">All products</div>
<div class="a" style="left:1925.2px;top:832.4px;width:44.6px;height:34.5px;background:#151924;border:1px solid #2a2f40;border-radius:6px;box-sizing:border-box"></div>
<svg class="a" style="left:1941.6px;top:846.6px" width="12" height="6"><circle cx="2.40" cy="3" r="1.35" fill="#c8cdd8"/><circle cx="6.00" cy="3" r="1.35" fill="#c8cdd8"/><circle cx="9.60" cy="3" r="1.35" fill="#c8cdd8"/></svg>
<div class="a" style="left:308px;top:900.2px;width:1662px;height:1.2px;background:#2a2f40;"></div>
<div class="a" style="left:308px;top:947.2px;width:1662px;height:1px;background:#262b3b;"></div>
<div class="a" style="left:308px;top:1022.2px;width:1662px;height:1px;background:#262b3b;"></div>
<div class="a" style="left:308px;top:1097.7px;width:1662px;height:1px;background:#262b3b;"></div>
<div class="a" style="left:308.2px;top:915.8px;width:17px;height:17px;background:transparent;border:1.3px solid #3a3f52;border-radius:4px;box-sizing:border-box"></div>
<div class="a" style="left:424.4px;top:917.16px;font-size:13.4px;line-height:13.4px;color:#a3aabb;font-weight:700;">PRODUCT</div>
<div class="a" style="left:801.7px;top:917.16px;font-size:13.4px;line-height:13.4px;color:#a3aabb;font-weight:700;">CUSTOMER</div>
<div class="a" style="left:1011px;top:917.16px;font-size:13.4px;line-height:13.4px;color:#a3aabb;font-weight:700;">RATING</div>
<div class="a" style="left:1126.5px;top:917.16px;font-size:13.4px;line-height:13.4px;color:#a3aabb;font-weight:700;">REVIEW</div>
<div class="a" style="left:1691px;top:917.16px;font-size:13.4px;line-height:13.4px;color:#a3aabb;font-weight:700;">STATUS</div>
<div class="a" style="left:1864px;top:917.16px;font-size:13.4px;line-height:13.4px;color:#a3aabb;font-weight:700;">TIME</div>
<svg class="a" style="left:496px;top:919.5px" width="6" height="9" viewBox="0 0 6 9"><polygon points="3,0 6,3.3 0,3.3" fill="#9aa2b5"/><polygon points="3,9 6,5.7 0,5.7" fill="#9aa2b5"/></svg>
<svg class="a" style="left:882.5px;top:919.5px" width="6" height="9" viewBox="0 0 6 9"><polygon points="3,0 6,3.3 0,3.3" fill="#9aa2b5"/><polygon points="3,9 6,5.7 0,5.7" fill="#9aa2b5"/></svg>
<svg class="a" style="left:1067.5px;top:919.5px" width="6" height="9" viewBox="0 0 6 9"><polygon points="3,0 6,3.3 0,3.3" fill="#9aa2b5"/><polygon points="3,9 6,5.7 0,5.7" fill="#9aa2b5"/></svg>
<svg class="a" style="left:1185.5px;top:919.5px" width="6" height="9" viewBox="0 0 6 9"><polygon points="3,0 6,3.3 0,3.3" fill="#9aa2b5"/><polygon points="3,9 6,5.7 0,5.7" fill="#9aa2b5"/></svg>
<svg class="a" style="left:1747.5px;top:919.5px" width="6" height="9" viewBox="0 0 6 9"><polygon points="3,0 6,3.3 0,3.3" fill="#9aa2b5"/><polygon points="3,9 6,5.7 0,5.7" fill="#9aa2b5"/></svg>
<svg class="a" style="left:1901.5px;top:919.5px" width="6" height="9" viewBox="0 0 6 9"><polygon points="3,0 6,3.3 0,3.3" fill="#9aa2b5"/><polygon points="3,9 6,5.7 0,5.7" fill="#9aa2b5"/></svg>
<div class="a" style="left:308.2px;top:976.0999999999999px;width:17px;height:17px;background:transparent;border:1.3px solid #3a3f52;border-radius:4px;box-sizing:border-box"></div>
<div class="a" style="left:350.3px;top:956.0999999999999px;width:57.2px;height:56.5px;background:transparent;border:1px solid #2a2f40;border-radius:5px;box-sizing:border-box"></div>
<div class="a" style="left:424.4px;top:977.53px;font-size:13.9px;line-height:13.9px;color:#80a7f6;-webkit-text-stroke:0.3px #80a7f6;">Fitbit Sense Advanced Smartwatch with Tools fo...</div>
<div class="a" style="left:860.6px;top:977.53px;font-size:13.9px;line-height:13.9px;color:#c3c8d4;-webkit-text-stroke:0.3px #c3c8d4;">Richard Dawkins</div>
<svg class="a" style="left:1011.5px;top:978.0999999999999px" width="12.5" height="12.5" viewBox="0 0 24 24"><polygon points="12,2 14.9,8.6 22,9.2 16.6,13.9 18.2,21 12,17.3 5.8,21 7.4,13.9 2,9.2 9.1,8.6" fill="#f5bd5a" stroke="#f5bd5a" stroke-width="1.5" stroke-linejoin="round"/></svg>
<svg class="a" style="left:1023.4px;top:978.0999999999999px" width="12.5" height="12.5" viewBox="0 0 24 24"><polygon points="12,2 14.9,8.6 22,9.2 16.6,13.9 18.2,21 12,17.3 5.8,21 7.4,13.9 2,9.2 9.1,8.6" fill="#f5bd5a" stroke="#f5bd5a" stroke-width="1.5" stroke-linejoin="round"/></svg>
<svg class="a" style="left:1035.3px;top:978.0999999999999px" width="12.5" height="12.5" viewBox="0 0 24 24"><polygon points="12,2 14.9,8.6 22,9.2 16.6,13.9 18.2,21 12,17.3 5.8,21 7.4,13.9 2,9.2 9.1,8.6" fill="#f5bd5a" stroke="#f5bd5a" stroke-width="1.5" stroke-linejoin="round"/></svg>
<svg class="a" style="left:1047.2px;top:978.0999999999999px" width="12.5" height="12.5" viewBox="0 0 24 24"><polygon points="12,2 14.9,8.6 22,9.2 16.6,13.9 18.2,21 12,17.3 5.8,21 7.4,13.9 2,9.2 9.1,8.6" fill="#f5bd5a" stroke="#f5bd5a" stroke-width="1.5" stroke-linejoin="round"/></svg>
<svg class="a" style="left:1059.1px;top:978.0999999999999px" width="12.5" height="12.5" viewBox="0 0 24 24"><polygon points="12,2 14.9,8.6 22,9.2 16.6,13.9 18.2,21 12,17.3 5.8,21 7.4,13.9 2,9.2 9.1,8.6" fill="#f5bd5a" stroke="#f5bd5a" stroke-width="1.5" stroke-linejoin="round"/></svg>
<div class="a" style="left:1126.6px;top:968.82px;font-size:13.8px;line-height:13.8px;color:#c8cdd8;-webkit-text-stroke:0.3px #c8cdd8;">This Fitbit is fantastic! I was trying to be in better shape and needed some motivation,</div>
<div class="a" style="left:1126.6px;top:988.12px;font-size:13.8px;line-height:13.8px;color:#c8cdd8;-webkit-text-stroke:0.3px #c8cdd8;">so I decided to treat myself to a new Fitbit.</div>
<div class="a" style="left:1691px;top:976.8px;width:96.7px;height:18.6px;background:#1c2a2a;border:1px solid #2b4433;border-radius:4px;box-sizing:border-box"></div>
<div class="a" style="left:1700.6px;top:980.53px;font-size:10.6px;line-height:10.6px;color:#72c977;font-weight:700;letter-spacing:0.1px">APPROVED</div>
<svg class="a" style="left:1765px;top:980.8px" width="11" height="9" viewBox="0 0 11 9"><polyline points="1,4.5 4,7.5 10,1.2" fill="none" stroke="#72c977" stroke-width="1.6" stroke-linecap="round" stroke-linejoin="round"/></svg>
<div class="a" style="left:1853px;top:978.30px;font-size:13px;line-height:13px;color:#d6d9e0;font-weight:700;">Just now</div>
<svg class="a" style="left:1941.7px;top:981.5999999999999px" width="12" height="6"><circle cx="2.40" cy="3" r="1.35" fill="#c8cdd8"/><circle cx="6.00" cy="3" r="1.35" fill="#c8cdd8"/><circle cx="9.60" cy="3" r="1.35" fill="#c8cdd8"/></svg>
<div class="a" style="left:308.2px;top:1051.3px;width:17px;height:17px;background:transparent;border:1.3px solid #3a3f52;border-radius:4px;box-sizing:border-box"></div>
<div class="a" style="left:350.3px;top:1031.3px;width:57.2px;height:56.5px;background:transparent;border:1px solid #2a2f40;border-radius:5px;box-sizing:border-box"></div>
<div class="a" style="left:424.4px;top:1052.73px;font-size:13.9px;line-height:13.9px;color:#80a7f6;-webkit-text-stroke:0.3px #80a7f6;">iPhone 13 pro max-Pacific Blue-128GB storage</div>
<div class="a" style="left:860.6px;top:1052.73px;font-size:13.9px;line-height:13.9px;color:#c3c8d4;-webkit-text-stroke:0.3px #c3c8d4;">Ashley Garrett</div>
<svg class="a" style="left:1011.5px;top:1053.3px" width="12.5" height="12.5" viewBox="0 0 24 24"><polygon points="12,2 14.9,8.6 22,9.2 16.6,13.9 18.2,21 12,17.3 5.8,21 7.4,13.9 2,9.2 9.1,8.6" fill="#f5bd5a" stroke="#f5bd5a" stroke-width="1.5" stroke-linejoin="round"/></svg>
<svg class="a" style="left:1023.4px;top:1053.3px" width="12.5" height="12.5" viewBox="0 0 24 24"><polygon points="12,2 14.9,8.6 22,9.2 16.6,13.9 18.2,21 12,17.3 5.8,21 7.4,13.9 2,9.2 9.1,8.6" fill="#f5bd5a" stroke="#f5bd5a" stroke-width="1.5" stroke-linejoin="round"/></svg>
<svg class="a" style="left:1035.3px;top:1053.3px" width="12.5" height="12.5" viewBox="0 0 24 24"><polygon points="12,2 14.9,8.6 22,9.2 16.6,13.9 18.2,21 12,17.3 5.8,21 7.4,13.9 2,9.2 9.1,8.6" fill="#f5bd5a" stroke="#f5bd5a" stroke-width="1.5" stroke-linejoin="round"/></svg>
<svg class="a" style="left:1047.2px;top:1053.3px" width="12.5" height="12.5" viewBox="0 0 24 24"><polygon points="12,2 14.9,8.6 22,9.2 16.6,13.9 18.2,21 12,17.3 5.8,21 7.4,13.9 2,9.2 9.1,8.6" fill="none" stroke="#f5bd5a" stroke-width="2" stroke-linejoin="round"/></svg>
<svg class="a" style="left:1059.1px;top:1053.3px" width="12.5" height="12.5" viewBox="0 0 24 24"><polygon points="12,2 14.9,8.6 22,9.2 16.6,13.9 18.2,21 12,17.3 5.8,21 7.4,13.9 2,9.2 9.1,8.6" fill="none" stroke="#f5bd5a" stroke-width="2" stroke-linejoin="round"/></svg>
<div class="a" style="left:1126.6px;top:1044.02px;font-size:13.8px;line-height:13.8px;color:#c8cdd8;-webkit-text-stroke:0.3px #c8cdd8;">The order was delivered ahead of schedule. To give us additional time, you should</div>
<div class="a" style="left:1126.6px;top:1063.32px;font-size:13.8px;line-height:13.8px;color:#c8cdd8;-webkit-text-stroke:0.3px #c8cdd8;">leave the packaging sealed with plastic.</div>
<div class="a" style="left:1691px;top:1052.0px;width:96.7px;height:18.6px;background:#1c2a2a;border:1px solid #2b4433;border-radius:4px;box-sizing:border-box"></div>
<div class="a" style="left:1700.6px;top:1055.73px;font-size:10.6px;line-height:10.6px;color:#72c977;font-weight:700;letter-spacing:0.1px">APPROVED</div>
<svg class="a" style="left:1765px;top:1056.0px" width="11" height="9" viewBox="0 0 11 9"><polyline points="1,4.5 4,7.5 10,1.2" fill="none" stroke="#72c977" stroke-width="1.6" stroke-linecap="round" stroke-linejoin="round"/></svg>
<div class="a" style="left:1853px;top:1053.50px;font-size:13px;line-height:13px;color:#d6d9e0;font-weight:700;">Just now</div>
<svg class="a" style="left:1941.7px;top:1056.8px" width="12" height="6"><circle cx="2.40" cy="3" r="1.35" fill="#c8cdd8"/><circle cx="6.00" cy="3" r="1.35" fill="#c8cdd8"/><circle cx="9.60" cy="3" r="1.35" fill="#c8cdd8"/></svg>
<div class="a" style="left:308.2px;top:1126.8px;width:17px;height:17px;background:transparent;border:1.3px solid #3a3f52;border-radius:4px;box-sizing:border-box"></div>
<div class="a" style="left:350.3px;top:1106.8px;width:57.2px;height:56.5px;background:transparent;border:1px solid #2a2f40;border-radius:5px;box-sizing:border-box"></div>
<div class="a" style="left:424.4px;top:1128.23px;font-size:13.9px;line-height:13.9px;color:#80a7f6;-webkit-text-stroke:0.3px #80a7f6;">MacBook Pro 13&quot; Apple M1 chip with 8-core CPU and 8-core GPU</div>
<div class="a" style="left:860.6px;top:1128.23px;font-size:13.9px;line-height:13.9px;color:#c3c8d4;-webkit-text-stroke:0.3px #c3c8d4;">Stanly Drinkwater</div>
<svg class="a" style="left:1011.5px;top:1128.8px" width="12.5" height="12.5" viewBox="0 0 24 24"><polygon points="12,2 14.9,8.6 22,9.2 16.6,13.9 18.2,21 12,17.3 5.8,21 7.4,13.9 2,9.2 9.1,8.6" fill="#f5bd5a" stroke="#f5bd5a" stroke-width="1.5" stroke-linejoin="round"/></svg>
<svg class="a" style="left:1023.4px;top:1128.8px" width="12.5" height="12.5" viewBox="0 0 24 24"><polygon points="12,2 14.9,8.6 22,9.2 16.6,13.9 18.2,21 12,17.3 5.8,21 7.4,13.9 2,9.2 9.1,8.6" fill="#f5bd5a" stroke="#f5bd5a" stroke-width="1.5" stroke-linejoin="round"/></svg>
<svg class="a" style="left:1035.3px;top:1128.8px" width="12.5" height="12.5" viewBox="0 0 24 24"><polygon points="12,2 14.9,8.6 22,9.2 16.6,13.9 18.2,21 12,17.3 5.8,21 7.4,13.9 2,9.2 9.1,8.6" fill="#f5bd5a" stroke="#f5bd5a" stroke-width="1.5" stroke-linejoin="round"/></svg>
<svg class="a" style="left:1047.2px;top:1128.8px" width="12.5" height="12.5" viewBox="0 0 24 24"><polygon points="12,2 14.9,8.6 22,9.2 16.6,13.9 18.2,21 12,17.3 5.8,21 7.4,13.9 2,9.2 9.1,8.6" fill="#f5bd5a" stroke="#f5bd5a" stroke-width="1.5" stroke-linejoin="round"/></svg>
<svg class="a" style="left:1059.1px;top:1128.8px" width="12.5" height="12.5" viewBox="0 0 24 24"><polygon points="12,2 14.9,8.6 22,9.2 16.6,13.9 18.2,21 12,17.3 5.8,21 7.4,13.9 2,9.2 9.1,8.6" fill="none" stroke="#f5bd5a" stroke-width="2" stroke-linejoin="round"/></svg>
<div class="a" style="left:1126.6px;top:1119.52px;font-size:13.8px;line-height:13.8px;color:#c8cdd8;-webkit-text-stroke:0.3px #c8cdd8;">It&#39;s a Mac, after all. Once you&#39;ve gone Mac, there&#39;s no going back. My first Mac lasted</div>
<div class="a" style="left:1126.6px;top:1138.82px;font-size:13.8px;line-height:13.8px;color:#c8cdd8;-webkit-text-stroke:0.3px #c8cdd8;">over nine years.</div>
<div class="a" style="left:1692px;top:1127.5px;width:83px;height:18.6px;background:#241f1d;border:1px solid #45392c;border-radius:4px;box-sizing:border-box"></div>
<div class="a" style="left:801.6px;top:963.8px;width:42.4px;height:42.4px;border-radius:50%;background:#1f2a48"></div>
<div class="a" style="left:807.8px;width:30px;text-align:center;top:974.72px;font-size:21px;line-height:21px;color:#3f86f4;font-weight:700;">R</div>
<svg class="a" style="left:801.6px;top:1039.3px" width="42.4" height="42.4" viewBox="0 0 42 42"><defs><clipPath id="cav"><circle cx="21" cy="21" r="21"/></clipPath><linearGradient id="avg" x1="0" y1="0" x2="0" y2="1"><stop offset="0" stop-color="#a5a5a7"/><stop offset="1" stop-color="#6a6a6e"/></linearGradient></defs><g clip-path="url(#cav)"><rect width="42" height="42" fill="url(#avg)"/><path d="M10 34 Q9 8 21 3.5 Q33 8 32 34 Z" fill="#141010"/><ellipse cx="20.8" cy="17.5" rx="6.3" ry="8.3" fill="#b48672"/><path d="M3 42 Q5 31 16 29 L21 36 L26 29 Q37 31 39 42 Z" fill="#151313"/><path d="M16.5 29 L21 42 L25.5 29 Q21 31 16.5 29 Z" fill="#a83a2e"/></g></svg>
<svg class="a" style="left:801.6px;top:1115px" width="42.4" height="42.4" viewBox="0 0 42 42"><defs><clipPath id="cav3"><circle cx="21" cy="21" r="21"/></clipPath></defs><g clip-path="url(#cav3)"><rect width="42" height="42" fill="#aab4c4"/><ellipse cx="21" cy="12" rx="9" ry="8" fill="#1d1a1a"/><ellipse cx="21" cy="19" rx="7" ry="8.5" fill="#d0a58c"/></g></svg>
<svg class="a" style="left:364px;top:968px" width="31" height="33" viewBox="0 0 31 33"><ellipse cx="12.5" cy="16.5" rx="11.5" ry="16" fill="#2a2d36"/><ellipse cx="12" cy="17" rx="9" ry="13.5" fill="#1b1d24"/><path d="M13 4 L26 6 Q29.5 7 29.5 11 L29 21 Q28.5 25 25 25 L15 23 Q12 22.5 12 19 L12 7 Q12 4 13 4 Z" fill="#4a4744"/><path d="M14.5 6.5 L25.5 8.3 Q27.3 8.8 27.2 11 L26.8 20 Q26.5 22.5 24.5 22.2 L16 20.8 Q14 20.5 14 18 L14 8.5 Q14 6.5 14.5 6.5 Z" fill="#0d0e12"/><rect x="17" y="9.5" width="7" height="3" fill="#dcdfe6" opacity="0.85"/><path d="M22 19 L26.5 10 L26.5 19.5 Z" fill="#3a8ee0"/><circle cx="19" cy="17" r="0.9" fill="#d9453a"/></svg>
<svg class="a" style="left:364px;top:1041px" width="30" height="39" viewBox="0 0 30 39"><defs><linearGradient id="pg" x1="0" y1="0" x2="0" y2="1"><stop offset="0" stop-color="#c9def5"/><stop offset="1" stop-color="#9cb2d6"/></linearGradient></defs><rect x="15.5" y="1" width="14" height="37" rx="2.5" fill="#0f2c78"/><path d="M19 12 L28 5 L28 9 L20 15 Z M19 19 L28 13 L28 16 L19 22 Z" fill="#3f8cf5"/><rect x="20" y="19" width="3" height="17" fill="#2f78e8"/><rect x="0" y="0.5" width="19.5" height="38" rx="2.8" fill="url(#pg)"/><rect x="1.5" y="2" width="7.5" height="8.5" rx="2" fill="#a9bfdc"/><circle cx="3.7" cy="4" r="1.6" fill="#22262e"/><circle cx="3.7" cy="8.3" r="1.6" fill="#22262e"/><circle cx="7.2" cy="6.2" r="1.5" fill="#2a2e36"/><circle cx="9.8" cy="19" r="1.2" fill="#b8c9e3"/></svg>
<svg class="a" style="left:361px;top:1123px" width="37" height="7" viewBox="0 0 37 7"><defs><linearGradient id="mg" x1="0" y1="0" x2="1" y2="0"><stop offset="0" stop-color="#2b3550"/><stop offset="0.15" stop-color="#c9508a"/><stop offset="0.3" stop-color="#7f8fb0"/><stop offset="0.45" stop-color="#3f9ad8"/><stop offset="0.6" stop-color="#8a8fa8"/><stop offset="0.68" stop-color="#f0521a"/><stop offset="0.82" stop-color="#f05a1a"/><stop offset="1" stop-color="#a8d8f5"/></linearGradient></defs><rect x="0" y="0" width="37" height="7" rx="1" fill="#050507"/><rect x="1" y="1" width="35" height="6" fill="url(#mg)"/></svg>
<div class="a" style="left:0px;top:64px;width:2px;height:1066px;background:#323649;"></div>
<div class="a" style="left:2010px;top:64px;width:2px;height:1066px;background:#323649;"></div>
<div class="a" style="left:0px;top:1128px;width:2012px;height:2px;background:#323649;"></div>
</div></body></html>
